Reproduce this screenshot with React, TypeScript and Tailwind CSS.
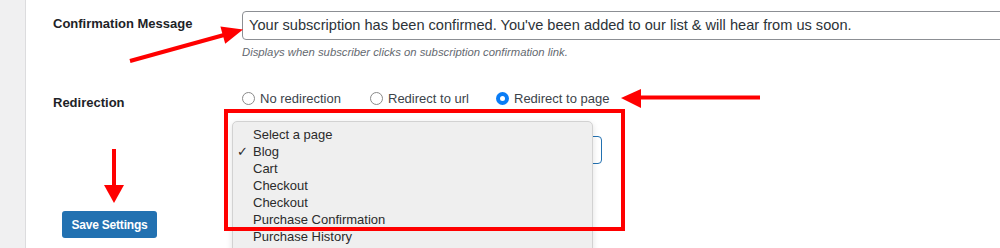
import React from "react";

const items = [
  "Select a page",
  "Blog",
  "Cart",
  "Checkout",
  "Checkout",
  "Purchase Confirmation",
  "Purchase History",
  "Subscription Confirmation",
];

function Radio({ label, checked }: { label: string; checked?: boolean }) {
  return (
    <label className="flex items-center gap-[5px]">
      {checked ? (
        <span className="w-[13px] h-[13px] rounded-full bg-[#0a7cf5] flex items-center justify-center">
          <span className="w-[5px] h-[5px] rounded-full bg-white" />
        </span>
      ) : (
        <span className="w-[13px] h-[13px] rounded-full border border-[#8a8a8a] bg-white" />
      )}
      <span>{label}</span>
    </label>
  );
}

export default function App() {
  return (
    <div
      className="relative w-[1000px] h-[248px] overflow-hidden bg-white flex"
      style={{ fontFamily: '"Liberation Sans", Arial, sans-serif' }}
    >
      <div className="w-[26px] shrink-0 bg-[#f0f0f1] border-r border-[#dcdcde]" />
      <div className="flex-1 pl-[27px] pt-[11px] flex flex-col">
        {/* Row 1 */}
        <div className="flex">
          <div className="w-[189px] shrink-0 pt-[3px] text-[13px] leading-[20px] font-bold text-[#1d2327]">
            Confirmation Message
          </div>
          <div className="flex flex-col">
            <div className="w-[800px] h-[29px] border border-[#8c8f94] rounded-[4px] pl-[6px] flex items-center text-[14.6px] text-[#2c3338]">
              Your subscription has been confirmed. You've been added to our list &amp; will hear from us soon.
            </div>
            <div className="mt-[4px] text-[11.3px] leading-[16px] italic text-[#646970]">
              Displays when subscriber clicks on subscription confirmation link.
            </div>
          </div>
        </div>
        {/* Row 2 */}
        <div className="flex mt-[28px]">
          <div className="w-[189px] shrink-0 pt-[5px] text-[13px] leading-[20px] font-bold text-[#1d2327]">
            Redirection
          </div>
          <div className="flex flex-col">
            <div className="flex items-center h-[21px] text-[13px] text-[#3c434a]">
              <div className="w-[128px]">
                <Radio label="No redirection" />
              </div>
              <div className="w-[126px]">
                <Radio label="Redirect to url" />
              </div>
              <Radio label="Redirect to page" checked />
            </div>
            <div className="mt-[27px] w-[360px] h-[28px] border border-[#2271b1] rounded-[4px] bg-white" />
          </div>
        </div>
        <div className="mt-[47px] ml-[9px]">
          <button className="w-[95px] h-[27px] rounded-[3px] bg-[#2271b1] text-white text-[12px] font-bold tracking-[-0.2px]">
            Save Settings
          </button>
        </div>
      </div>

      {/* Dropdown menu overlay */}
      <div className="absolute left-[232px] top-[121px] w-[361px] h-[140px] bg-[#efefef] border border-[#d2d2d2] rounded-t-[5px] shadow-[0_2px_6px_rgba(0,0,0,0.12)] pt-[4px] text-[13px] text-[#2b2b2b]">
        {items.map((it, i) => (
          <div key={i} className="relative h-[17px] leading-[17px] pl-[20px]">
            {it === "Blog" && (
              <span className="absolute left-[4px] top-0 text-[13px]">✓</span>
            )}
            {it}
          </div>
        ))}
      </div>

      {/* Red annotation rectangle */}
      <div className="absolute left-[224px] top-[109px] w-[401px] h-[122px] border-4 border-[#ff0000] pointer-events-none" />

      {/* Arrows */}
      <svg className="absolute left-0 top-0 pointer-events-none" width="1000" height="248">
        <line x1="130" y1="61" x2="224" y2="35" stroke="#ff0000" strokeWidth="4" />
        <polygon points="243,29.5 220.4,26.4 225.2,43.8" fill="#ff0000" />
        <line x1="760" y1="97.5" x2="638" y2="97.5" stroke="#ff0000" strokeWidth="4" />
        <polygon points="621,98 641,89 641,108" fill="#ff0000" />
        <line x1="114" y1="149" x2="114" y2="187" stroke="#ff0000" strokeWidth="4" />
        <polygon points="104,185 124,185 114,203" fill="#ff0000" />
      </svg>
    </div>
  );
}
